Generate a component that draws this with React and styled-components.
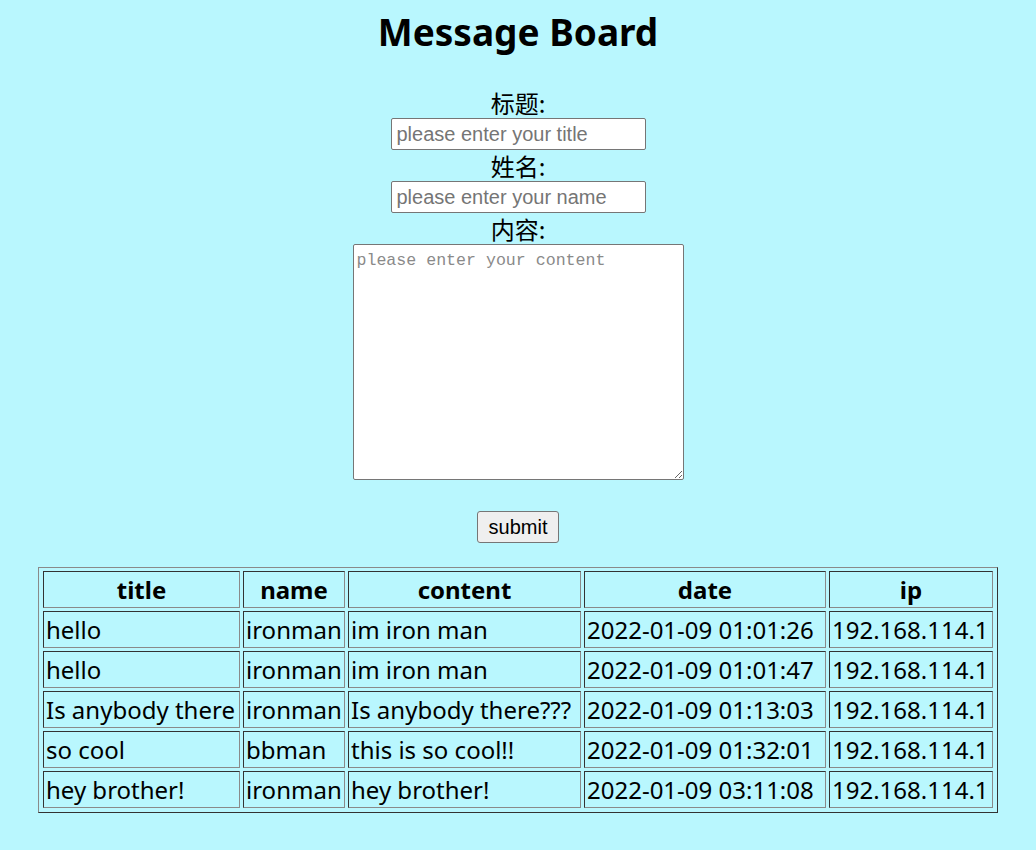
import React from "react";
import styled, { createGlobalStyle } from "styled-components";

const Global = createGlobalStyle`
  html, body {
    margin: 0;
    padding: 0;
    background: #b9f7fe;
  }
  body {
    font-family: "Noto Sans", "Noto Sans CJK SC", sans-serif;
    color: #000;
  }
`;

const Page = styled.main`
  display: flex;
  flex-direction: column;
  align-items: center;
  padding-bottom: 38px;
`;

const Title = styled.h1`
  margin: 10px 0 33px;
  font-size: 37px;
  line-height: 44px;
  font-weight: 700;
`;

const Form = styled.form`
  display: flex;
  flex-direction: column;
  align-items: center;
`;

const Label = styled.label`
  font-size: 24px;
  line-height: 31px;
  height: 31px;
  font-family: "Noto Sans CJK SC", "Noto Sans", sans-serif;
`;

const TextInput = styled.input`
  box-sizing: border-box;
  width: 255px;
  height: 32px;
  margin: 0;
  padding: 1px 5px;
  border: 1px solid #767676;
  border-radius: 2px;
  background: #fff;
  font-family: "Liberation Sans", Arial, sans-serif;
  font-size: 20px;
  &::placeholder {
    color: #757575;
  }
`;

const TextArea = styled.textarea`
  box-sizing: border-box;
  width: 331px;
  height: 236px;
  margin: 0;
  padding: 6px 3px;
  border: 1px solid #767676;
  border-radius: 2px;
  background: #fff;
  font-family: "Liberation Mono", "Courier New", monospace;
  font-size: 16.6px;
  &::placeholder {
    color: #8a8a8a;
  }
`;

const SubmitButton = styled.button`
  box-sizing: border-box;
  margin-top: 31px;
  width: 82px;
  height: 32px;
  padding: 0;
  border: 1px solid #767676;
  border-radius: 3px;
  background: #efefef;
  color: #000;
  font-family: "Liberation Sans", Arial, sans-serif;
  font-size: 20px;
`;

const Table = styled.table`
  margin-top: 24px;
  box-sizing: border-box;
  width: 960px;
  table-layout: fixed;
  border-collapse: separate;
  border-spacing: 3px;
  padding: 0 1px 1px 1px;
  border: 1px solid;
  border-color: #8a8a8a #333 #333 #8a8a8a;
  font-size: 24px;
`;

const Cell = styled.td`
  box-sizing: border-box;
  padding: 1px 2px;
  line-height: 33px;
  height: 37px;
  border: 1px solid;
  border-color: #333 #8a8a8a #8a8a8a #333;
  white-space: nowrap;
  overflow: hidden;
  text-align: ${(p) => (p.$head ? "center" : "left")};
  font-weight: ${(p) => (p.$head ? 700 : 400)};
`;

const columns = [
  { key: "title", width: 197 },
  { key: "name", width: 102 },
  { key: "content", width: 233 },
  { key: "date", width: 242 },
  { key: "ip", width: 164 },
];

const rows = [
  ["hello", "ironman", "im iron man", "2022-01-09 01:01:26", "192.168.114.1"],
  ["hello", "ironman", "im iron man", "2022-01-09 01:01:47", "192.168.114.1"],
  ["Is anybody there", "ironman", "Is anybody there???", "2022-01-09 01:13:03", "192.168.114.1"],
  ["so cool", "bbman", "this is so cool!!", "2022-01-09 01:32:01", "192.168.114.1"],
  ["hey brother!", "ironman", "hey brother!", "2022-01-09 03:11:08", "192.168.114.1"],
];

export default function App() {
  return (
    <>
      <Global />
      <Page>
        <Title>Message Board</Title>
        <Form onSubmit={(e) => e.preventDefault()}>
          <Label htmlFor="t">标题:</Label>
          <TextInput id="t" placeholder="please enter your title" />
          <Label htmlFor="n">姓名:</Label>
          <TextInput id="n" placeholder="please enter your name" />
          <Label htmlFor="c">内容:</Label>
          <TextArea id="c" placeholder="please enter your content" />
          <SubmitButton type="submit">submit</SubmitButton>
        </Form>
        <Table>
          <thead>
            <tr>
              {columns.map((c) => (
                <Cell as="th" $head key={c.key} style={{ width: c.width }}>
                  {c.key}
                </Cell>
              ))}
            </tr>
          </thead>
          <tbody>
            {rows.map((r, i) => (
              <tr key={i}>
                {r.map((v, j) => (
                  <Cell key={j}>{v}</Cell>
                ))}
              </tr>
            ))}
          </tbody>
        </Table>
      </Page>
    </>
  );
}
